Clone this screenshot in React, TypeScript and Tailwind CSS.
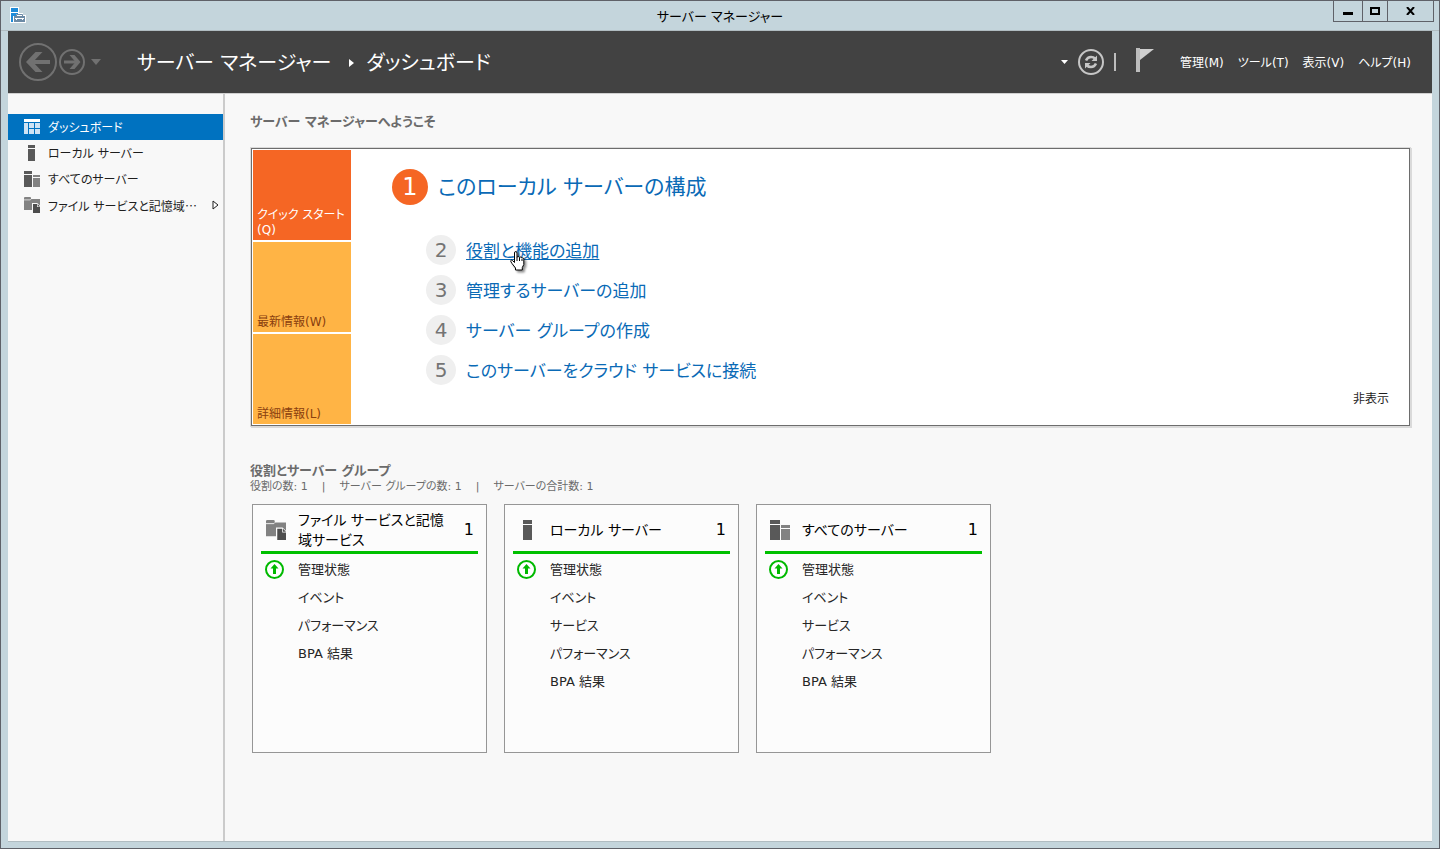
import { ReactNode } from 'react'
import clsx from 'clsx'

const LocalServerIcon = ({ size = 16 }: { size?: number }) => (
  <svg width={size} height={size} viewBox="0 0 16 16" shapeRendering="crispEdges">
    <path d="M4 0h7v3H4zM4 4h7v12H4z" fill="#595959" />
  </svg>
)

const AllServersIcon = ({ size = 16 }: { size?: number }) => (
  <svg width={size} height={size} viewBox="0 0 16 16" shapeRendering="crispEdges">
    <path d="M0 0h8v3H0zM0 4h8v12H0z" fill="#595959" />
    <path d="M9 4h7v2H9zM9 7h7v9H9z" fill="#828282" />
  </svg>
)

const FileServicesIcon = ({ size = 16, bg = '#f8f8f8' }: { size?: number; bg?: string }) => (
  <svg width={size} height={size} viewBox="0 0 16 16">
    <path d="M0 3V1q0-1 1-1h5q1 0 1 1v1h9v11H0z" fill="#828282" />
    <path d="M0 2.900h6.300l.8-.9" stroke={bg} strokeWidth=".7" fill="none" />
    <path d="M8 6h5.200L16.500 9v7.500H8z" fill={bg} />
    <path d="M9 7h4v3h3v6H9z" fill="#4d4d4d" />
    <path d="M13.600 7L16 9.400h-2.400z" fill="#4d4d4d" />
  </svg>
)

const DashboardIcon = () => (
  <svg width="16" height="16" viewBox="0 0 16 16" shapeRendering="crispEdges">
    <path d="M0 0h16v3H0z" fill="#fff" />
    <path d="M0 4h4v11H0zM5 4h5v5H5zM11 4h5v5h-5zM5 10h5v5H5zM11 10h5v5h-5z" fill="#cfe3f4" />
  </svg>
)

const AppIcon = () => (
  <svg width="16" height="16" viewBox="0 0 16 16">
    <path d="M0 0h9v6h4v2h3v8H0z" fill="#fff" />
    <path d="M1 1h7v4H1zM1 6h7v1H6v2H3v6H1z" fill="#1e8bd8" />
    <path d="M4 9h11v6H4z" fill="#6c8ba6" />
    <path d="M6.500 9V7.500h6V9" stroke="#6c8ba6" fill="none" />
    <path d="M5 11.500h9M6.500 11v2M12.500 11v2" stroke="#fff" fill="none" />
  </svg>
)

const BackIcon = () => (
  <svg width="38" height="38" viewBox="0 0 38 38" fill="none" stroke="#717171">
    <circle cx="19" cy="19" r="18" strokeWidth="2" />
    <path d="M31 19H10" strokeWidth="4" />
    <path d="M23.500 9h-7L7 19l9.500 10h7l-9.500-10z" fill="#717171" stroke="none" />
  </svg>
)

const ForwardIcon = () => (
  <svg width="26" height="26" viewBox="0 0 26 26" fill="none" stroke="#717171">
    <circle cx="13" cy="13" r="12" strokeWidth="2" />
    <path d="M5 13h13" strokeWidth="3" />
    <path d="M10.500 6h5l6 7-6 7h-5l6-7z" fill="#717171" stroke="none" />
  </svg>
)

const RefreshIcon = () => (
  <svg width="26" height="26" viewBox="0 0 26 26" fill="none" stroke="#c6c6c6">
    <circle cx="13" cy="13" r="12" strokeWidth="2" />
    <path d="M8 11.500q1.500-3.500 5-3.500 2.500 0 4 1.500M18 14.500q-1.500 3.500-5 3.500-2.500 0-4-1.500" strokeWidth="2.500" />
    <path d="M19 6.500v5.500h-5.500zM7 19.500V14h5.500z" fill="#c6c6c6" stroke="none" />
  </svg>
)

const FlagIcon = () => (
  <svg width="18" height="24" viewBox="0 0 18 24">
    <path d="M0 0h4v24H0z" fill="#bdbdbd" />
    <path d="M4 1h14L4 12z" fill="#cfcfcf" />
  </svg>
)

const StatusUpIcon = () => (
  <svg width="20" height="20" viewBox="0 0 20 20">
    <circle cx="9.500" cy="9.500" r="8.500" fill="#fff" stroke="#00b900" strokeWidth="2" />
    <path d="M9.500 4l4 4.500H11V14H8V8.500H5.500z" fill="#00b900" />
  </svg>
)

const HandCursor = () => (
  <svg className="pointer-events-none absolute left-11 top-4 drop-shadow-[2px_2px_1px_rgba(0,0,0,0.45)]" width="15" height="20" viewBox="0 0 15 20">
    <path
      d="M4.500 11.500V2q0-1.500 1.250-1.500T7 2v4.500q.2-1 1.200-1t1.300 1.200q.3-.7 1.200-.7t1.200 1.200q.4-.5 1.100-.3t.8 1.300v5.300l-1.500 3v2.500H5.500V17L2 12.500Q.5 10.500.7 9.700q.8-1.200 2 0z"
      fill="#fff"
      stroke="#000"
    />
    <path d="M7 6.500V10M9.500 7v3M12 8v2" stroke="#000" />
  </svg>
)

const menus = ['管理(M)', 'ツール(T)', '表示(V)', 'ヘルプ(H)']

const navItems = [
  { label: 'ダッシュボード', icon: <DashboardIcon />, active: true },
  { label: 'ローカル サーバー', icon: <LocalServerIcon /> },
  { label: 'すべてのサーバー', icon: <AllServersIcon /> },
  { label: 'ファイル サービスと記憶域', icon: <FileServicesIcon />, expandable: true },
]

const tabs = [
  { label: 'クイック スタート(Q)', active: true },
  { label: '最新情報(W)' },
  { label: '詳細情報(L)' },
]

const steps = [
  { no: 2, label: '役割と機能の追加', hover: true },
  { no: 3, label: '管理するサーバーの追加' },
  { no: 4, label: 'サーバー グループの作成' },
  { no: 5, label: 'このサーバーをクラウド サービスに接続' },
]

const groups = [
  {
    title: 'ファイル サービスと記憶域サービス',
    icon: <FileServicesIcon size={20} bg="#fcfcfc" />,
    rows: ['イベント', 'パフォーマンス', 'BPA 結果'],
  },
  {
    title: 'ローカル サーバー',
    icon: <LocalServerIcon size={20} />,
    rows: ['イベント', 'サービス', 'パフォーマンス', 'BPA 結果'],
  },
  {
    title: 'すべてのサーバー',
    icon: <AllServersIcon size={20} />,
    rows: ['イベント', 'サービス', 'パフォーマンス', 'BPA 結果'],
  },
]

const TitleBar = () => (
  <div className="grid h-[30px] grid-cols-[1fr_auto_1fr] items-start border-b border-[#b0bcc1]">
    <div className="pl-[9px] pt-1.5"><AppIcon /></div>
    <h1 className="pt-1 text-[13px] leading-6 text-black">サーバー マネージャー</h1>
    <div className="mr-[5px] flex h-[21px] justify-self-end border-x border-b border-[#5f6168]">
      <button className="flex w-7 items-center justify-center" aria-label="最小化">
        <svg width="10" height="10"><path d="M0 6h10v3H0z" /></svg>
      </button>
      <button className="flex w-[26px] items-center justify-center border-x border-[#5f6168]" aria-label="最大化">
        <svg width="10" height="8"><path d="M1 1h8v6H1z" fill="none" stroke="#000" strokeWidth="2" /></svg>
      </button>
      <button className="flex w-[45px] items-center justify-center" aria-label="閉じる">
        <svg width="9" height="8" viewBox="0 0 9 8"><path d="M1 0l7 8M8 0L1 8" stroke="#000" strokeWidth="2" /></svg>
      </button>
    </div>
  </div>
)

const Header = () => (
  <header className="flex h-[62px] items-center bg-[#424242] pl-[11px] pr-[21px] text-white">
    <button aria-label="戻る"><BackIcon /></button>
    <button className="ml-0.5" aria-label="進む"><ForwardIcon /></button>
    <button className="ml-1.5" aria-label="履歴">
      <svg width="10" height="6"><path d="M0 0h10L5 6z" fill="#717171" /></svg>
    </button>
    <div className="ml-9 flex items-center pt-0.5 text-[20px] leading-8">
      <span>サーバー マネージャー</span>
      <svg className="ml-[18px] mr-3" width="5" height="8"><path d="M0 0l5 4-5 4z" fill="#fff" /></svg>
      <span>ダッシュボード</span>
    </div>
    <div className="ml-auto flex items-center">
      <button aria-label="更新オプション">
        <svg width="7" height="4"><path d="M0 0h7L3.500 4z" fill="#fff" /></svg>
      </button>
      <button className="ml-2.5" aria-label="最新の情報に更新"><RefreshIcon /></button>
      <div className="ml-2.5 h-[18px] w-0.5 bg-[#bdbdbd]" />
      <button className="mb-1 ml-5" aria-label="通知"><FlagIcon /></button>
      <nav className="ml-[26px] flex gap-3.5 pt-0.5 text-xs">
        { menus.map(v => <button key={v}>{ v }</button>) }
      </nav>
    </div>
  </header>
)

const Sidebar = () => (
  <nav className="w-[217px] shrink-0 border-r-2 border-[#cbcbcb] pt-5">
    { navItems.map(v => (
      <a
        key={v.label}
        href="#"
        className={clsx('flex h-[26px] items-center pl-4 pr-1 text-xs', v.active ? 'bg-[#0072c0] text-white' : 'text-[#1e1e1e]')}
      >
        <span className="mr-2 shrink-0">{ v.icon }</span>
        <span className="whitespace-nowrap pt-0.5">
          { v.label }
          { v.expandable && <span className="font-['Noto_Sans_CJK_JP',sans-serif]">…</span> }
        </span>
        { v.expandable && (
          <svg className="ml-auto shrink-0" width="7" height="10"><path d="M1 1l5 4-5 4z" fill="#fff" stroke="#1e1e1e" /></svg>
        ) }
      </a>
    )) }
  </nav>
)

const Welcome = () => (
  <section className="ml-px flex border border-[#6d6d6d] bg-white p-px shadow-[0_0_0_1px_#dadada,1px_1px_0_1px_#dadada]">
    <div className="flex w-[98px] shrink-0 flex-col gap-0.5">
      { tabs.map(v => (
        <button
          key={v.label}
          className={clsx(
            'flex h-[90px] items-end px-1 pb-0.5 text-left text-xs leading-[15px]',
            v.active ? 'bg-[#f56624] text-white' : 'bg-[#ffb445] text-[#8a3f0f]',
          )}
        >
          { v.label }
        </button>
      )) }
    </div>
    <div className="flex grow flex-col pl-[41px] pt-[19px]">
      <a href="#" className="flex items-center gap-2.5 text-[21px] leading-9 text-[#0a6ab6]">
        <span className="flex size-9 items-center justify-center rounded-full bg-[#f56624] text-2xl text-white">1</span>
        このローカル サーバーの構成
      </a>
      <ul className="mt-[30px] flex flex-col gap-2.5 pl-[34px]">
        { steps.map(v => (
          <li key={v.no} className="flex items-center gap-2.5">
            <span className="flex size-[30px] items-center justify-center rounded-full bg-[#efefef] text-xl text-[#747474]">{ v.no }</span>
            <a href="#" className={clsx('relative pt-0.5 text-[17px] leading-7 text-[#0a6ab6]', v.hover && 'underline underline-offset-2')}>
              { v.label }
              { v.hover && <HandCursor /> }
            </a>
          </li>
        )) }
      </ul>
    </div>
    <button className="mb-[17px] mr-[19px] self-end text-xs leading-4 text-[#1e1e1e]">非表示</button>
  </section>
)

const GroupCard = ({ title, icon, rows }: { title: string; icon: ReactNode; rows: string[] }) => (
  <article className="h-[249px] w-[235px] border border-[#969696] bg-[#fcfcfc] px-2">
    <div className="flex h-[49px] items-center border-b-[3px] border-[#00c000] pl-[5px] pr-1 pt-[3px]">
      <span className="w-8 shrink-0">{ icon }</span>
      <h3 className="w-[150px] break-all text-sm leading-5 text-black">{ title }</h3>
      <span className="ml-auto text-base text-black">1</span>
    </div>
    <ul className="pt-0.5 text-[13px] leading-7 text-[#262626]">
      <li className="flex items-center pl-1">
        <span className="w-[33px] shrink-0"><StatusUpIcon /></span>
        管理状態
      </li>
      { rows.map(v => <li key={v} className="pl-[37px]">{ v }</li>) }
    </ul>
  </article>
)

export default function App() {
  return (
    <div className="flex min-h-screen flex-col border border-[#5f6168] bg-[#c4d5dc] pb-1.5 font-['DejaVu_Sans','Noto_Sans_CJK_JP',sans-serif] [font-feature-settings:'palt']" lang="ja">
      <TitleBar />
      <div className="mx-[7px] flex grow flex-col">
        <Header />
        <div className="flex grow border-y border-t-[#d0d0d0] border-b-[#b0bcc1] bg-[#f8f8f8]">
          <Sidebar />
          <main className="min-w-0 grow pl-[25px] pr-[22px] pt-[18px]">
            <h2 className="mb-4 text-[13px] font-bold leading-5 text-[#6b6b6b]">サーバー マネージャーへようこそ</h2>
            <Welcome />
            <h2 className="mt-[35px] text-[13px] font-bold leading-5 text-[#6b6b6b]">役割とサーバー グループ</h2>
            <p className="flex gap-3.5 text-[11px] leading-3 text-[#6b6b6b]">
              <span>役割の数: 1</span>
              <span>|</span>
              <span>サーバー グループの数: 1</span>
              <span>|</span>
              <span>サーバーの合計数: 1</span>
            </p>
            <div className="mt-[11px] flex flex-wrap gap-[17px] pl-0.5">
              { groups.map(v => <GroupCard key={v.title} {...v} />) }
            </div>
          </main>
        </div>
      </div>
    </div>
  )
}
